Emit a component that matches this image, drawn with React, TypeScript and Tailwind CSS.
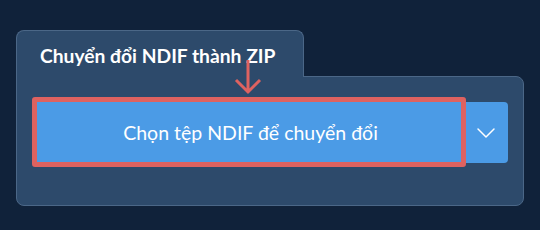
import { ChevronDown } from 'lucide-react'

export default function App() {
  return (
    <div
      className="w-[540px] h-[230px] bg-[#10223a] px-4 pt-[30px]"
      style={{ fontFamily: 'Lato, "Noto Sans", sans-serif' }}
    >
      <div className="relative">
        {/* tab */}
        <div className="relative z-10 -mb-px w-[288px] h-[47px] rounded-t-lg border border-b-0 border-[#4b6787] bg-[#2d4a6b] pl-[23px] pt-[12px]">
          <h2 className="text-[19.25px] font-bold leading-[26px] text-white">Chuyển đổi NDIF thành ZIP</h2>
        </div>

        {/* panel */}
        <div className="h-[130px] rounded-b-lg rounded-tr-lg border border-[#4b6787] bg-[#2d4a6b] pl-5 pr-[15px] pt-[25px]">
          <div className="relative flex h-[61px]">
            <button className="flex h-full w-[427px] items-center justify-center bg-[#4b9be6] text-[19.5px] font-normal text-white">
              Chọn tệp NDIF để chuyển đổi
            </button>
            <button className="flex h-full w-[44px] items-center justify-center rounded-r bg-[#4b9be6] text-white">
              <ChevronDown className="h-8 w-8" strokeWidth={1.1} />
            </button>
            <div className="pointer-events-none absolute -left-[5px] -top-[5px] h-[70px] w-[434px] rounded-[3px] border-[5px] border-[#de6260]" />
          </div>
        </div>

        {/* annotation arrow */}
        <svg
          className="pointer-events-none absolute left-[216px] top-[28px] z-20"
          width="32"
          height="38"
          viewBox="0 0 32 38"
        >
          <path d="M16 2 L16 34 M4 22 L16 34 L28 22" fill="none" stroke="#de6260" strokeWidth="3" strokeLinecap="butt" strokeLinejoin="miter" />
        </svg>
      </div>
    </div>
  )
}
